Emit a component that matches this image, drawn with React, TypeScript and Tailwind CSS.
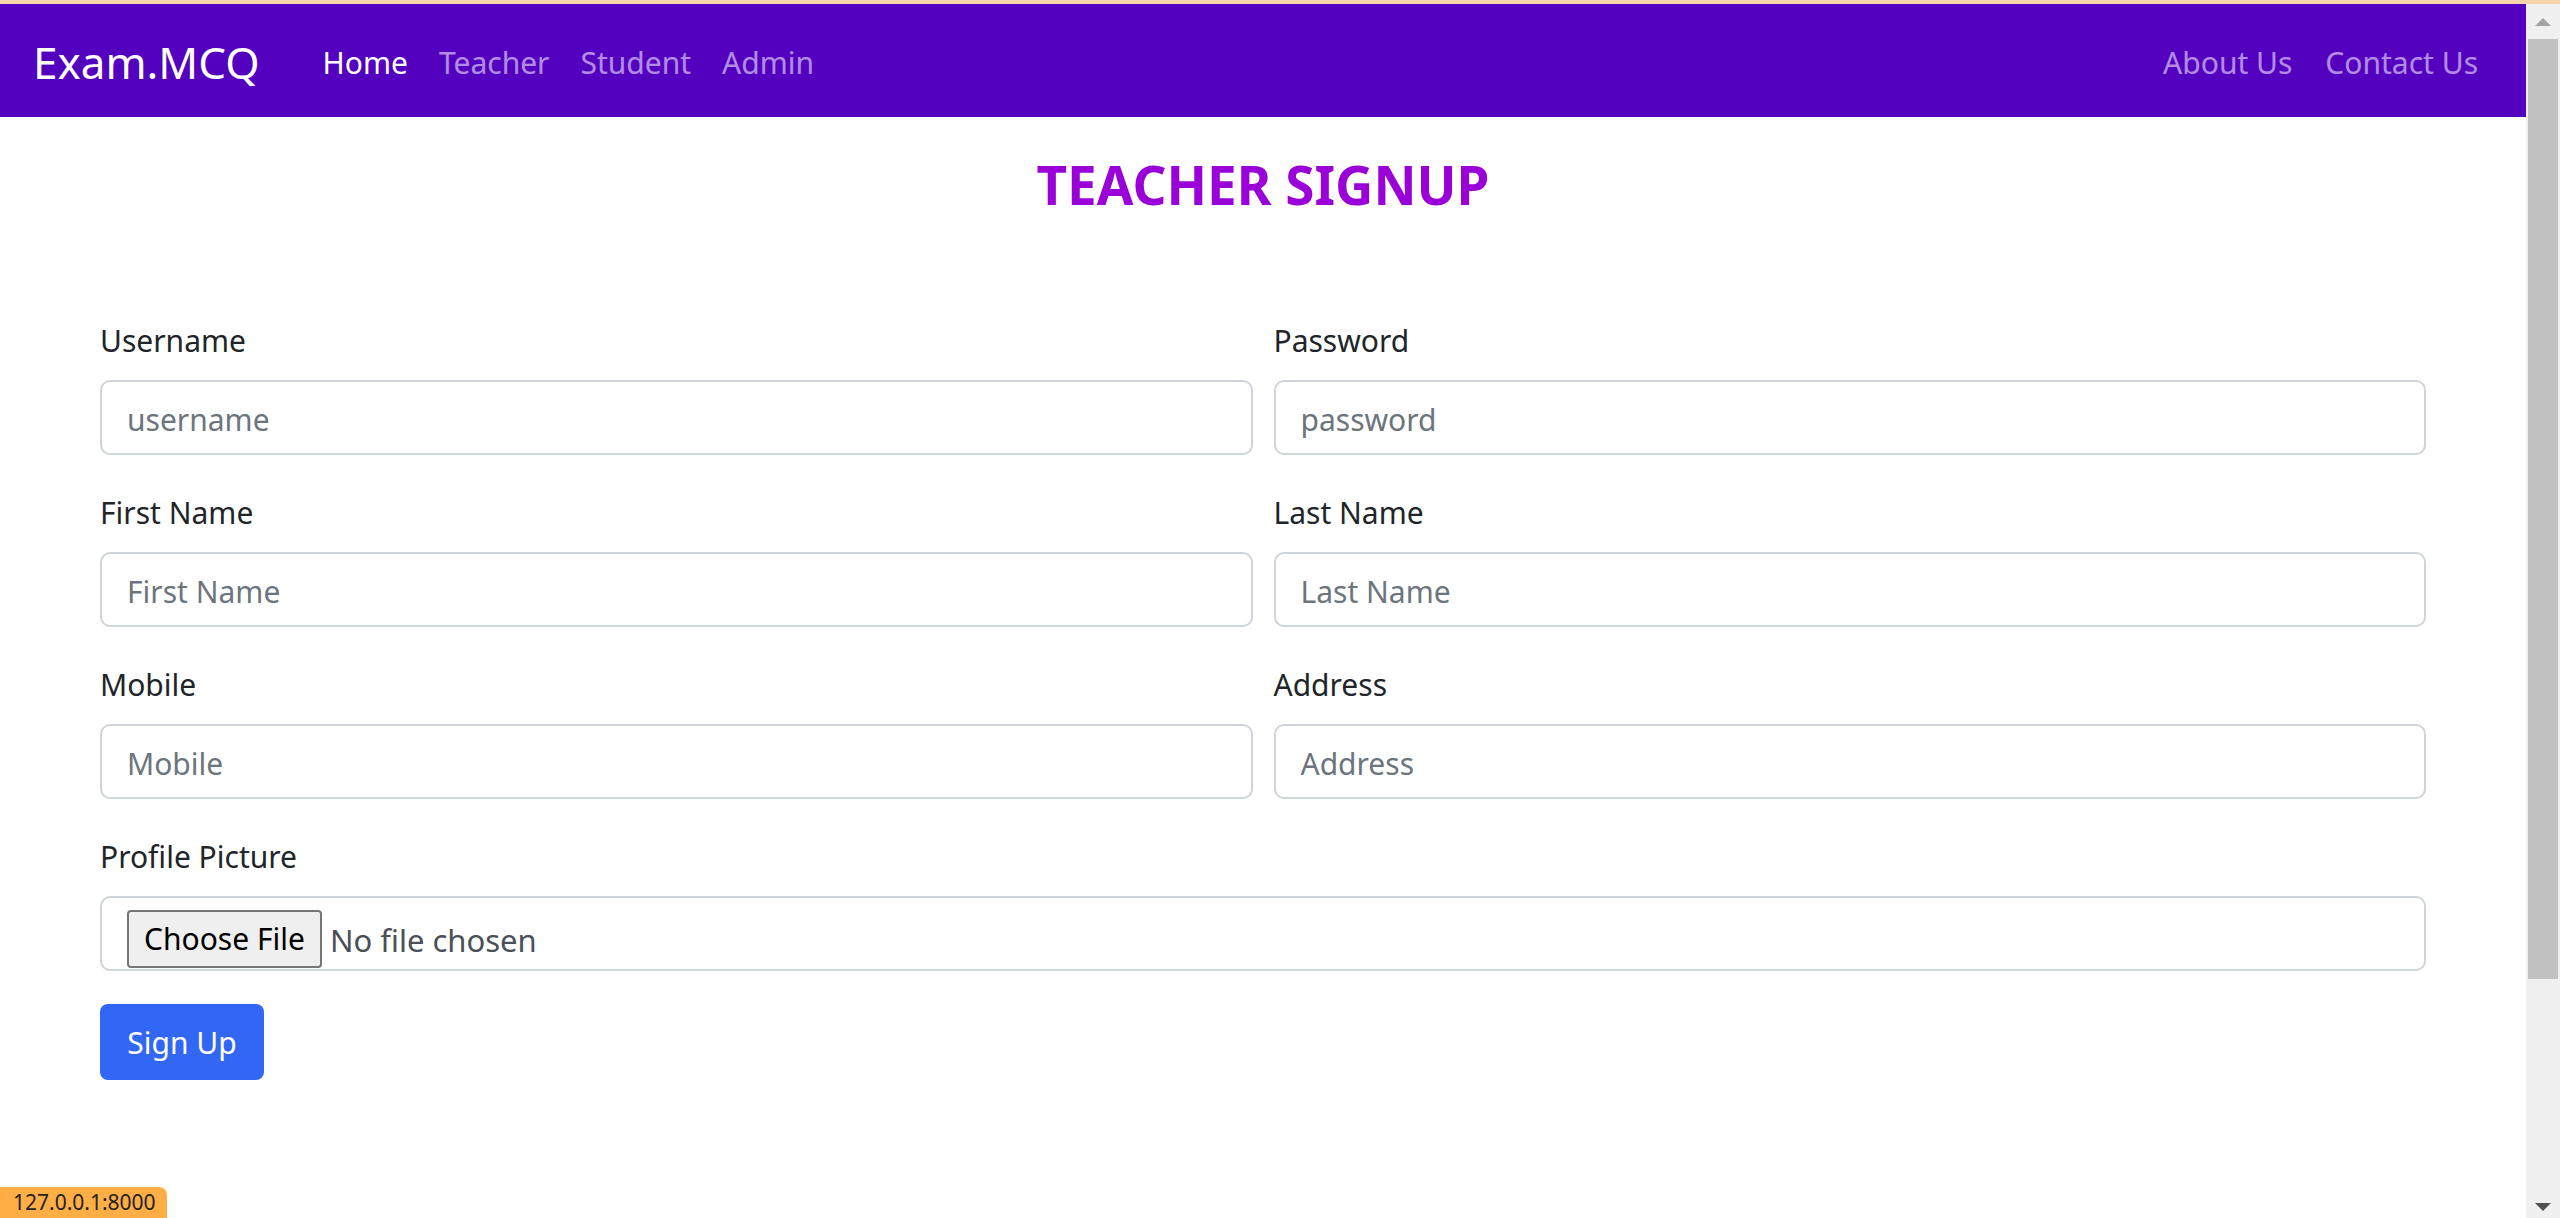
import { useState } from "react";

const fields = [
  { label: "Username", placeholder: "username", type: "text" },
  { label: "Password", placeholder: "password", type: "password" },
  { label: "First Name", placeholder: "First Name", type: "text" },
  { label: "Last Name", placeholder: "Last Name", type: "text" },
  { label: "Mobile", placeholder: "Mobile", type: "text" },
  { label: "Address", placeholder: "Address", type: "text" },
];

const NavBar = () => (
  <nav className="h-[113px] bg-[#5300bf] flex items-center pt-[3px] pl-[33px] pr-[48px]">
    <a className="text-[44px] text-white leading-none mr-[63px]" href="#">
      Exam.MCQ
    </a>
    <div className="flex gap-[31px] text-[30px]">
      <a className="text-white" href="#">
        Home
      </a>
      <a className="text-white/55" href="#">
        Teacher
      </a>
      <a className="text-white/55" href="#">
        Student
      </a>
      <a className="text-white/55" href="#">
        Admin
      </a>
    </div>
    <div className="ml-auto flex gap-[33px] text-[30px]">
      <a className="text-white/55" href="#">
        About Us
      </a>
      <a className="text-white/55" href="#">
        Contact Us
      </a>
    </div>
  </nav>
);

const ScrollBar = () => (
  <div className="w-[34px] shrink-0 bg-[#f0f0f0] flex flex-col items-center">
    <div className="h-[35px] flex items-center justify-center">
      <div className="w-0 h-0 border-l-[8px] border-r-[8px] border-b-[8px] border-l-transparent border-r-transparent border-b-[#a3a3a3]" />
    </div>
    <div className="w-[30px] h-[940px] bg-[#c1c1c1]" />
    <div className="flex-1 flex items-end pb-[7px]">
      <div className="w-0 h-0 border-l-[8px] border-r-[8px] border-t-[8px] border-l-transparent border-r-transparent border-t-[#505050]" />
    </div>
  </div>
);

export default function App() {
  const [values, setValues] = useState<Record<string, string>>({});

  return (
    <div className="h-[1218px] w-full overflow-hidden bg-white flex flex-col font-['Noto_Sans',sans-serif] text-[#212529]">
      <div className="h-[4px] bg-[#f6d5aa] shrink-0" />
      <div className="flex flex-1 min-h-0">
        <div className="flex-1 flex flex-col relative">
          <NavBar />

          <h1 className="mt-[37px] text-center text-[53px] leading-[62px] font-bold text-[#9a00d8]">
            TEACHER SIGNUP
          </h1>

          <form
            className="px-[100px] mt-[102px]"
            onSubmit={(e) => e.preventDefault()}
          >
            <div className="grid grid-cols-2 gap-x-[21px] gap-y-[35px]">
              {fields.map((f) => (
                <div key={f.label}>
                  <label className="block text-[30px] leading-[45px] mb-[17px]">
                    {f.label}
                  </label>
                  <input
                    type={f.type === "password" ? "text" : f.type}
                    placeholder={f.placeholder}
                    value={values[f.label] ?? ""}
                    onChange={(e) =>
                      setValues({ ...values, [f.label]: e.target.value })
                    }
                    className="w-full h-[75px] rounded-[10px] border-2 border-[#ced4da] px-[25px] pt-[4px] text-[30px] outline-none placeholder:text-[#6c757d]"
                  />
                </div>
              ))}
            </div>

            <label className="block text-[30px] leading-[45px] mt-[35px] mb-[17px]">
              Profile Picture
            </label>
            <div className="h-[75px] rounded-[10px] border-2 border-[#ced4da] pl-[25px] flex items-end pb-[1px]">
              <button
                type="button"
                className="h-[58px] px-[15px] bg-[#efefef] border-2 border-[#767676] rounded-[4px] text-[30px] leading-none text-black"
              >
                Choose File
              </button>
              <span className="ml-[8px] mb-[10px] text-[31px] leading-[36px] text-[#495057]">
                No file chosen
              </span>
            </div>

            <button
              type="submit"
              className="mt-[33px] h-[76px] w-[164px] rounded-[8px] bg-[#3266f5] text-white text-[30px]"
            >
              Sign Up
            </button>
          </form>

          <div className="absolute left-0 bottom-0 h-[31px] w-[167px] bg-[#ffad45] rounded-tr-[8px] pl-[13px] text-[21px] leading-[31px] text-[#222]">
            127.0.0.1:8000
          </div>
        </div>
        <ScrollBar />
      </div>
    </div>
  );
}
